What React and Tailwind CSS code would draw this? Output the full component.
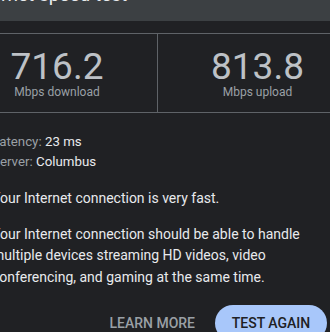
export default function App() {
  return (
    <div className="w-[330px] h-[332px] overflow-hidden bg-[#202124] font-[Roboto,sans-serif]">
      <div className="w-[400px] ml-[-43px]">
        <div className="h-[21px] bg-[#3c4043] overflow-hidden">
          <div className="mt-[-17px] pl-[12px] text-[19px] leading-[24px] text-[#e8eaed]">Internet speed test</div>
        </div>
        <div className="h-[12px]" />
        <div className="grid grid-cols-[201px_199px] border-y border-[#5f6368]">
          <div className="border-r border-[#5f6368] flex flex-col items-center pt-[18px] h-[78px]">
            <div className="text-[37px] leading-[30px] text-[#bdc1c6]">716.2</div>
            <div className="text-[12px] leading-[20px] text-[#9aa0a6]">Mbps download</div>
          </div>
          <div className="flex flex-col items-center pt-[18px] h-[78px]">
            <div className="text-[37px] leading-[30px] text-[#bdc1c6]">813.8</div>
            <div className="text-[12px] leading-[20px] text-[#9aa0a6]">Mbps upload</div>
          </div>
        </div>
        <div className="pl-[35px] pt-[19px] text-[14px] leading-[20px] text-[#e8eaed]">
          <div className="text-[13.3px]"><span className="text-[#9aa0a6]">Latency: </span>23 ms</div>
          <div className="text-[13.3px]"><span className="text-[#9aa0a6]">Server: </span>Columbus</div>
          <div className="mt-[16px]">Your Internet connection is very fast.</div>
          <div className="mt-[16px] leading-[21.4px] w-[320px]">Your Internet connection should be able to handle multiple devices streaming HD videos, video conferencing, and gaming at the same time.</div>
        </div>
        <div className="flex justify-end items-center gap-[20px] pr-[30px] mt-[17px]">
          <div className="text-[14px] font-medium text-[#9aa0a6]">LEARN MORE</div>
          <div className="h-[36px] w-[112px] rounded-full bg-[#a8c7fa] flex items-center justify-center text-[14px] font-medium text-[#202124]">TEST AGAIN</div>
        </div>
      </div>
    </div>
  );
}
